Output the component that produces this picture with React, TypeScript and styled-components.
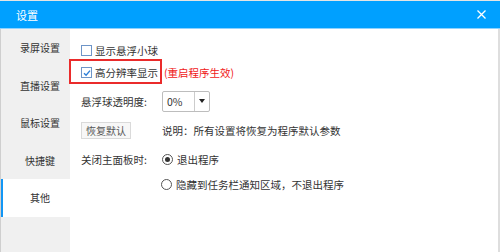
import styled, { createGlobalStyle } from "styled-components";

const GlobalStyle = createGlobalStyle`
  html, body {
    margin: 0;
    padding: 0;
    background: #ffffff;
  }
  body {
    font-family: "Noto Sans CJK SC", "Noto Sans", sans-serif;
  }
`;

const Window = styled.div`
  width: 500px;
  height: 252px;
  display: flex;
  flex-direction: column;
  overflow: hidden;
  border-top: 1px solid #e4e4e4;
  box-sizing: border-box;
`;

const TitleBar = styled.div`
  height: 27px;
  flex: none;
  background: #00a0ff;
  border-bottom: 1px solid #8ed2ff;
  display: flex;
  align-items: center;
  justify-content: space-between;
  padding: 0 13px 0 16px;
  color: #ffffff;
  font-size: 11px;
`;

const CloseButton = styled.span`
  display: flex;
  align-items: center;
  justify-content: center;
  width: 12px;
  height: 12px;
`;

const Body = styled.div`
  flex: 1;
  display: flex;
  min-height: 0;
`;

const Sidebar = styled.div`
  width: 69px;
  flex: none;
  background: #f0f0f0;
  border-left: 1px solid #cfcfcf;
  display: flex;
  flex-direction: column;
`;

const NavItem = styled.div<{ $active?: boolean }>`
  height: 37.5px;
  display: flex;
  align-items: center;
  justify-content: center;
  padding-left: 7px;
  font-size: 10px;
  color: #333333;
  background: ${(p) => (p.$active ? "#ffffff" : "transparent")};
  border-left: 2px solid ${(p) => (p.$active ? "#1296f5" : "transparent")};
  margin-left: ${(p) => (p.$active ? "0" : "0")};
`;

const Content = styled.div`
  flex: 1;
  border-right: 2px solid #dedede;
  padding: 10px 0 0 11px;
  display: flex;
  flex-direction: column;
  font-size: 10.5px;
  color: #333333;
`;

const Row = styled.div<{ $h: number }>`
  height: ${(p) => p.$h}px;
  display: flex;
  align-items: center;
  position: relative;
`;

const Label = styled.span`
  width: 81px;
  flex: none;
  white-space: nowrap;
`;

const Box = styled.span`
  width: 9px;
  height: 9px;
  border: 1px solid #6e95c8;
  background: #ffffff;
  margin-right: 3px;
  display: flex;
  align-items: center;
  justify-content: center;
  flex: none;
`;

const Hint = styled.span`
  color: #f01818;
  margin-left: 6px;
`;

const Highlight = styled.div`
  position: absolute;
  left: -12px;
  top: -2px;
  width: 89px;
  height: 21px;
  border: 2px solid #ea2b2b;
  pointer-events: none;
`;

const Select = styled.div`
  width: 46px;
  height: 19px;
  border: 1px solid #bdbdbd;
  border-radius: 2px;
  display: flex;
  align-items: stretch;
  background: #ffffff;
`;

const SelectValue = styled.span`
  flex: 1;
  display: flex;
  align-items: center;
  padding-left: 4px;
`;

const SelectArrow = styled.span`
  width: 14px;
  border-left: 1px solid #cccccc;
  display: flex;
  align-items: center;
  justify-content: center;
`;

const ResetButton = styled.span`
  width: 48px;
  height: 15px;
  border: 1px solid #dadada;
  background: #f7f7f7;
  display: flex;
  align-items: center;
  justify-content: center;
  margin-right: 31px;
  color: #555555;
  font-size: 10px;
`;

const Radio = styled.span<{ $checked?: boolean }>`
  width: 9px;
  height: 9px;
  border: 1px solid #555555;
  border-radius: 50%;
  margin-right: 4px;
  display: flex;
  align-items: center;
  justify-content: center;
  flex: none;
  &::after {
    content: "";
    width: 5px;
    height: 5px;
    border-radius: 50%;
    background: ${(p) => (p.$checked ? "#333333" : "transparent")};
  }
`;

const Indent = styled.span`
  width: 80px;
  flex: none;
`;

const navItems = ["录屏设置", "直播设置", "鼠标设置", "快捷键", "其他"];

export default function App() {
  return (
    <>
      <GlobalStyle />
      <Window>
        <TitleBar>
          <span>设置</span>
          <CloseButton>
            <svg width="9" height="9" viewBox="0 0 9 9">
              <path d="M0.5 0.5L8.5 8.5M8.5 0.5L0.5 8.5" stroke="#ffffff" strokeWidth="1.3" />
            </svg>
          </CloseButton>
        </TitleBar>
        <Body>
          <Sidebar>
            {navItems.map((item) => (
              <NavItem key={item} $active={item === "其他"}>
                {item}
              </NavItem>
            ))}
          </Sidebar>
          <Content>
            <Row $h={22}>
              <Box />
              <span>显示悬浮小球</span>
            </Row>
            <Row $h={23}>
              <Box>
                <svg width="8" height="8" viewBox="0 0 8 8">
                  <path d="M1 4.2L3.1 6.2L7 1.6" fill="none" stroke="#2e7fd9" strokeWidth="1.4" />
                </svg>
              </Box>
              <span>高分辨率显示</span>
              <Hint>(重启程序生效)</Hint>
              <Highlight />
            </Row>
            <Row $h={34}>
              <Label>悬浮球透明度:</Label>
              <Select>
                <SelectValue>0%</SelectValue>
                <SelectArrow>
                  <svg width="6" height="4" viewBox="0 0 6 4">
                    <path d="M0 0H6L3 4Z" fill="#222222" />
                  </svg>
                </SelectArrow>
              </Select>
            </Row>
            <Row $h={24}>
              <ResetButton>恢复默认</ResetButton>
              <span>说明：所有设置将恢复为程序默认参数</span>
            </Row>
            <Row $h={34}>
              <Label>关闭主面板时:</Label>
              <Radio $checked />
              <span>退出程序</span>
            </Row>
            <Row $h={16}>
              <Indent />
              <Radio />
              <span>隐藏到任务栏通知区域，不退出程序</span>
            </Row>
          </Content>
        </Body>
      </Window>
    </>
  );
}
